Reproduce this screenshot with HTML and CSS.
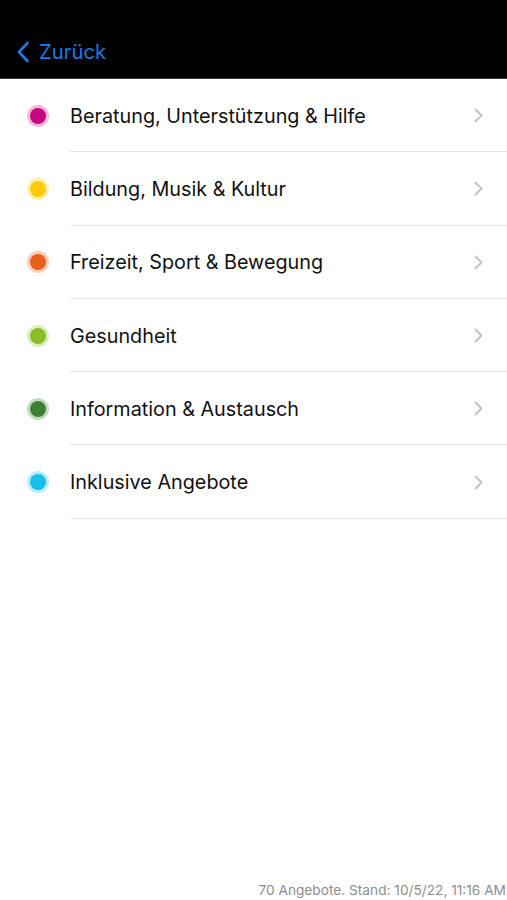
FILE: index.html
```html
<!DOCTYPE html>
<html lang="de">
<head>
<meta charset="utf-8">
<link rel="stylesheet" href="styles.css">
</head>
<body>
<div class="app">
  <header class="nav">
    <a class="back">
      <svg class="back-icon" width="14" height="22" viewBox="0 0 14 22"><path d="M11.5 2 L3 11 L11.5 20" fill="none" stroke="#1a7be0" stroke-width="2.6" stroke-linecap="round" stroke-linejoin="round"/></svg>
      <span>Zurück</span>
    </a>
  </header>
  <ul class="list">
    <li class="row"><span class="dot magenta"></span><span class="label">Beratung, Unterstützung &amp; Hilfe</span><svg class="chev" width="9" height="15" viewBox="0 0 9 15"><path d="M1.5 1.5 L7.5 7.5 L1.5 13.5" fill="none" stroke="#c4c4c7" stroke-width="2" stroke-linecap="round" stroke-linejoin="round"/></svg></li>
    <li class="row"><span class="dot yellow"></span><span class="label">Bildung, Musik &amp; Kultur</span><svg class="chev" width="9" height="15" viewBox="0 0 9 15"><path d="M1.5 1.5 L7.5 7.5 L1.5 13.5" fill="none" stroke="#c4c4c7" stroke-width="2" stroke-linecap="round" stroke-linejoin="round"/></svg></li>
    <li class="row"><span class="dot orange"></span><span class="label">Freizeit, Sport &amp; Bewegung</span><svg class="chev" width="9" height="15" viewBox="0 0 9 15"><path d="M1.5 1.5 L7.5 7.5 L1.5 13.5" fill="none" stroke="#c4c4c7" stroke-width="2" stroke-linecap="round" stroke-linejoin="round"/></svg></li>
    <li class="row"><span class="dot lime"></span><span class="label">Gesundheit</span><svg class="chev" width="9" height="15" viewBox="0 0 9 15"><path d="M1.5 1.5 L7.5 7.5 L1.5 13.5" fill="none" stroke="#c4c4c7" stroke-width="2" stroke-linecap="round" stroke-linejoin="round"/></svg></li>
    <li class="row"><span class="dot green"></span><span class="label">Information &amp; Austausch</span><svg class="chev" width="9" height="15" viewBox="0 0 9 15"><path d="M1.5 1.5 L7.5 7.5 L1.5 13.5" fill="none" stroke="#c4c4c7" stroke-width="2" stroke-linecap="round" stroke-linejoin="round"/></svg></li>
    <li class="row"><span class="dot cyan"></span><span class="label">Inklusive Angebote</span><svg class="chev" width="9" height="15" viewBox="0 0 9 15"><path d="M1.5 1.5 L7.5 7.5 L1.5 13.5" fill="none" stroke="#c4c4c7" stroke-width="2" stroke-linecap="round" stroke-linejoin="round"/></svg></li>
  </ul>
  <footer class="footer">70 Angebote. Stand: 10/5/22, 11:16 AM</footer>
</div>
</body>
</html>
```
FILE: styles.css
```css
* { box-sizing: border-box; }
html, body { margin: 0; padding: 0; background: #fff; }
body { font-family: Inter, "Liberation Sans", Arial, sans-serif; }
.app { width: 507px; height: 900px; display: flex; flex-direction: column; }
.nav { height: 79px; flex: none; background: #000; border-bottom: 1px solid #3a3a3c; display: flex; align-items: flex-end; padding: 0 0 14px 16px; }
.back { display: flex; align-items: center; gap: 9px; color: #1a7be0; font-size: 20.3px; }
.back-icon { display: block; }
.list { list-style: none; margin: 0; padding: 0; }
.row { height: 73.3px; display: flex; align-items: center; position: relative; padding-left: 26px; padding-right: 24px; }
.row::after { content: ""; position: absolute; left: 70px; right: 0; bottom: 0; height: 1px; background: #e6e6e8; }
.dot { width: 16px; height: 16px; border-radius: 50%; flex: none; margin-left: 4px; }
.magenta { background: #c7067f; box-shadow: 0 0 0 3px #f6b8dd; }
.yellow { background: #ffcb05; box-shadow: 0 0 0 3px #fff0b0; }
.orange { background: #e8601c; box-shadow: 0 0 0 3px #fbcdb6; }
.lime { background: #8dbb25; box-shadow: 0 0 0 3px #dcedbd; }
.green { background: #3a8231; box-shadow: 0 0 0 3px #c4dcc1; }
.cyan { background: #17c0ea; box-shadow: 0 0 0 3px #b7ecfa; }
.label { flex: 1; margin-left: 24px; font-size: 19.8px; color: #111; letter-spacing: 0; }
.chev { flex: none; }
.footer { margin-top: auto; text-align: right; padding: 0 1px 2px 0; font-size: 13.7px; color: #8e8e93; }
```
